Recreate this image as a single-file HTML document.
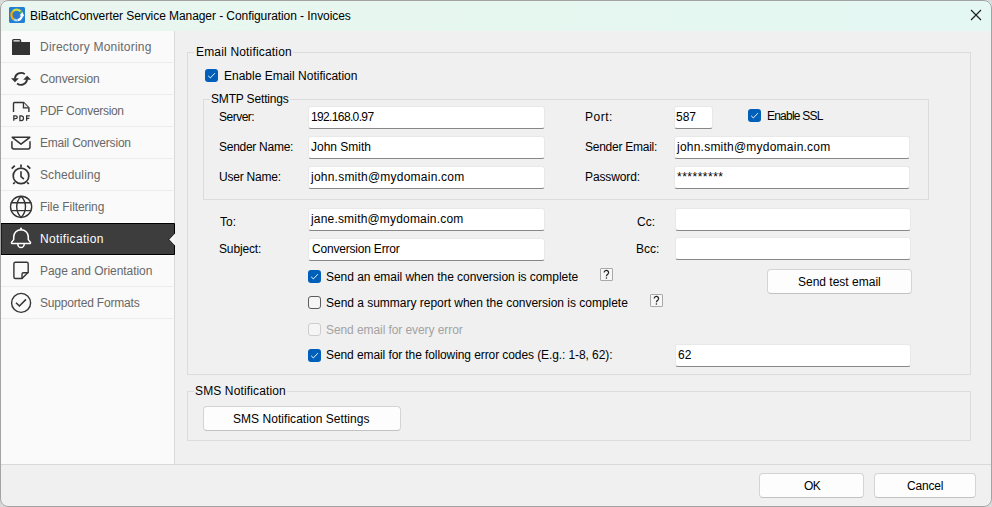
<!DOCTYPE html>
<html><head><meta charset="utf-8"><style>
*{box-sizing:border-box;margin:0;padding:0}
html,body{width:992px;height:507px;overflow:hidden;background:#d9d9d9}
body{font-family:"Liberation Sans",sans-serif;font-size:12px;color:#000;position:relative}
#win{position:absolute;left:0;top:0;width:992px;height:507px;border-radius:8px;background:#f0f0f0;overflow:hidden}
#bord{position:absolute;left:0;top:0;width:992px;height:507px;border:1px solid #a3a3a3;border-radius:8px}
#title{position:absolute;left:0;top:0;width:992px;height:31px;background:linear-gradient(90deg,#e9f6ef 0%,#e6f7f0 50%,#e4f7f2 100%)}
.t{position:absolute;line-height:14px;white-space:nowrap;font-size:12px}
#side{position:absolute;left:0;top:31px;width:175px;height:433px;background:#fafafa;border-right:1px solid #d9d9d9}
.sep{position:absolute;left:1px;width:172px;height:1px;background:#ececec}
#foot{position:absolute;left:0;top:464px;width:992px;height:1px;background:#d9d9d9}
.frame{position:absolute;border:1px solid #dcdcdc}
.gap{position:absolute;height:1px;background:#f0f0f0}
.inp{position:absolute;background:#fff;border:1px solid #e8e8e8;border-bottom:1px solid #878787;border-radius:3px}
.cb{position:absolute;width:13px;height:13px;border-radius:3px;background:#005fb8}
.cb svg{position:absolute;left:0;top:0}
.cbu{position:absolute;width:13px;height:13px;border-radius:3px;border:1px solid #5c5c5c;background:#f5f5f5}
.cbd{position:absolute;width:13px;height:13px;border-radius:3px;border:1px solid #cdcdcd;background:#f5f5f5}
.btn{position:absolute;background:#fdfdfd;border:1px solid #d4d4d4;border-bottom-color:#c2c2c2;border-radius:4px}
.q{position:absolute;width:13px;height:13px;border:1px solid #aaaaaa;background:#f7f7f7}
</style></head><body>
<div id="win">
<div id="title"></div>
<div id="side"></div>
<div class="sep" style="top:62px"></div><div class="sep" style="top:94px"></div><div class="sep" style="top:126px"></div><div class="sep" style="top:158px"></div><div class="sep" style="top:190px"></div><div class="sep" style="top:286px"></div><div class="sep" style="top:318px"></div>
<div class="sep" style="top:222px;background:#fff"></div>
<div class="sep" style="top:255px;background:#fff"></div>
<svg style="position:absolute;left:0;top:223px" width="176" height="32" viewBox="0 0 176 32">
  <path d="M1 0.5 H174.5 V11 L169 16.5 L174.5 22 V31.5 H1 Z" fill="#3d3d3d" stroke="#000" stroke-width="1"/>
  <path d="M175 10.5 L169.5 16.5 L175 22.5 Z" fill="#f5f5f5"/>
</svg>
<div id="foot"></div>
<svg style="position:absolute;left:0;top:0" width="40" height="320" viewBox="0 0 40 320">
  <g transform="translate(9,7)">
    <path d="M1 0 H15 L16 1 V15 L15 16 H1 L0 15 V1 Z" fill="#2180d6"/>
    <circle cx="7.7" cy="8" r="4.2" fill="#2a78d0"/>
    <g fill="none" stroke-width="2.3">
      <path d="M5.05 12.59 A5.3 5.3 0 0 1 3.95 4.25" stroke="#f7a800"/>
      <path d="M3.95 4.25 A5.3 5.3 0 0 1 11.76 4.59" stroke="#d6de3a"/>
      <path d="M11.5 4.3 A5.3 5.3 0 0 1 12.82 6.63" stroke="#5cb83c"/>
      <path d="M12.82 6.63 A5.3 5.3 0 0 1 8.62 13.22" stroke="#ffffff"/>
      <path d="M8.62 13.22 A5.3 5.3 0 0 1 5.05 12.59" stroke="#a8dcf4"/>
    </g>
    <path d="M10.6 8.2 L13.6 5.2 L15.3 9.6 Z" fill="#fff"/>
  </g>
  <!-- folder -->
  <rect x="12" y="42" width="18" height="13" fill="#333"/>
  <rect x="12" y="38.9" width="9.2" height="4" rx="1.6" fill="#333"/>
  <path d="M13.9 40.9 H19.3" stroke="#fafafa" stroke-width="1.1" stroke-linecap="round"/>
  <!-- conversion -->
  <g stroke="#333" stroke-width="1.8" fill="none">
    <path d="M14.9 78.6 A6.2 6.2 0 0 1 24.8 74.1"/>
    <path d="M17.1 83.5 A6.2 6.2 0 0 0 27.1 79.4"/>
  </g>
  <path d="M11 78.2 H18.9 L15 82.2 Z" fill="#333"/>
  <path d="M23.2 79.7 H31.1 L27.1 75.8 Z" fill="#333"/>
  <!-- pdf -->
  <path d="M13.5 112 V103.5 a1 1 0 0 1 1 -1 H23.6 L28.9 107.8 V112" stroke="#333" stroke-width="1.4" fill="none"/>
  <path d="M23.4 102.6 V107.9 H28.9" stroke="#333" stroke-width="1.2" fill="#e0e0e0"/>
  <g stroke="#333" stroke-width="1.25" fill="none">
    <path d="M13.8 120.8 V115.8 H15.8 a1.45 1.45 0 0 1 0 2.9 H13.8"/>
    <path d="M19.9 115.8 V120.6 H21.3 a2.2 2.4 0 0 0 0 -4.8 Z"/>
    <path d="M26.6 120.8 V115.8 H29.8 M26.6 118.3 H29.3"/>
  </g>
  <!-- email -->
  <path d="M12.2 137.3 H29.8 L21 144.2 Z" stroke="#333" stroke-width="1.5" stroke-linejoin="round" fill="none"/>
  <path d="M11.9 141.2 V147 a1.9 1.9 0 0 0 1.9 1.9 H28.1 a1.9 1.9 0 0 0 1.9 -1.9 V141.2" stroke="#333" stroke-width="1.5" fill="none"/>
  <!-- alarm -->
  <circle cx="21" cy="175.9" r="7.8" stroke="#333" stroke-width="1.7" fill="none"/>
  <path d="M21 171.2 V176.6 L23.9 179.1" stroke="#333" stroke-width="1.6" fill="none"/>
  <path d="M11.7 168.7 L14.8 165.6 M30.3 168.7 L27.2 165.6 M21 164.6 V167.3 M13.2 184 L14.8 182.4 M28.8 184 L27.2 182.4" stroke="#333" stroke-width="1.7" fill="none"/>
  <!-- globe -->
  <g stroke="#333" stroke-width="1.4" fill="none">
    <circle cx="21.1" cy="206.8" r="10.6"/>
    <path d="M21.1 196.2 A15 15 0 0 0 21.1 217.4 A15 15 0 0 0 21.1 196.2"/>
    <path d="M10.8 202.7 H31.4 M10.8 210.6 H31.4"/>
  </g>
  <!-- bell -->
  <g stroke="#fff" stroke-width="1.5" fill="none" stroke-linejoin="round">
    <path d="M12.4 243.6 H29.6 a0.9 0.9 0 0 0 0.7 -1.5 L28.3 239.6 V237 a7.3 7.3 0 0 0 -14.6 0 V239.6 L11.7 242.1 a0.9 0.9 0 0 0 0.7 1.5 Z"/>
    <path d="M17.8 244 A3.2 3.6 0 0 0 24.2 244"/>
    <path d="M21 228.4 V229.6" stroke-width="1.9" stroke-linecap="round"/>
  </g>
  <!-- page -->
  <path d="M15.4 278.5 H22 L28.2 272.3 V263.7 a1.5 1.5 0 0 0 -1.5 -1.5 H15.4 a1.5 1.5 0 0 0 -1.5 1.5 V277 a1.5 1.5 0 0 0 1.5 1.5 Z" stroke="#333" stroke-width="1.4" fill="none"/>
  <path d="M22 278.8 V274.3 a1.5 1.5 0 0 1 1.5 -1.5 H28.4" stroke="#333" stroke-width="1.4" fill="none"/>
  <!-- check circle -->
  <circle cx="21.1" cy="302.9" r="9.5" stroke="#333" stroke-width="1.4" fill="none"/>
  <path d="M16 302.8 L19.4 306 L26 299.4" stroke="#333" stroke-width="1.5" fill="none"/>
</svg>
<svg style="position:absolute;left:970px;top:9px" width="12" height="12" viewBox="0 0 12 12"><path d="M1 1L11 11M11 1L1 11" stroke="#1a1a1a" stroke-width="1.1"/></svg>

<div class="frame" style="left:187px;top:52px;width:784px;height:323px"></div><div class="gap" style="left:194px;top:52px;width:99px"></div>
<div class="frame" style="left:203px;top:99px;width:726px;height:101px"></div><div class="gap" style="left:210px;top:99px;width:80px"></div>
<div class="frame" style="left:187px;top:391px;width:784px;height:50px"></div><div class="gap" style="left:194px;top:391px;width:93px"></div>
<div class="cb" style="left:205px;top:69px"><svg width="13" height="13" viewBox="0 0 13 13"><path d="M3.2 6.9 L5.4 8.9 L9.9 4.2" stroke="#fff" stroke-width="0.95" fill="none"/></svg></div>
<div class="inp" style="left:308px;top:106px;width:237px;height:23px"></div>
<div class="inp" style="left:674px;top:106px;width:39px;height:23px"></div>
<div class="cb" style="left:748px;top:109px"><svg width="13" height="13" viewBox="0 0 13 13"><path d="M3.2 6.9 L5.4 8.9 L9.9 4.2" stroke="#fff" stroke-width="0.95" fill="none"/></svg></div>
<div class="inp" style="left:308px;top:136px;width:237px;height:23px"></div>
<div class="inp" style="left:674px;top:136px;width:236px;height:23px"></div>
<div class="inp" style="left:308px;top:166px;width:237px;height:23px"></div>
<div class="inp" style="left:674px;top:166px;width:236px;height:23px"></div>
<div class="inp" style="left:308px;top:208px;width:237px;height:23px"></div>
<div class="inp" style="left:675px;top:208px;width:236px;height:23px"></div>
<div class="inp" style="left:308px;top:238px;width:237px;height:23px"></div>
<div class="inp" style="left:675px;top:237px;width:236px;height:23px"></div>
<div class="cb" style="left:308px;top:270px"><svg width="13" height="13" viewBox="0 0 13 13"><path d="M3.2 6.9 L5.4 8.9 L9.9 4.2" stroke="#fff" stroke-width="0.95" fill="none"/></svg></div>
<div class="cbu" style="left:308px;top:296px"></div>
<div class="cbd" style="left:308px;top:323px"></div>
<div class="cb" style="left:308px;top:349px"><svg width="13" height="13" viewBox="0 0 13 13"><path d="M3.2 6.9 L5.4 8.9 L9.9 4.2" stroke="#fff" stroke-width="0.95" fill="none"/></svg></div>
<div class="inp" style="left:675px;top:344px;width:236px;height:23px"></div>
<div class="q" style="left:600px;top:268px;border:none"><div style="position:absolute;left:0;top:0;width:13px;height:13px;border:1px solid #a9a9a9;border-radius:1px"></div><svg style="position:absolute;left:0;top:0" width="13" height="13" viewBox="0 0 13 13"><path d="M4.2 4.6 A2.2 2.1 0 1 1 7.9 6.1 Q6.4 6.9 6.4 8.3" stroke="#262626" stroke-width="1.25" fill="none"/><circle cx="6.4" cy="10" r="0.8" fill="#262626"/></svg></div>
<div class="q" style="left:650px;top:294px;border:none"><div style="position:absolute;left:0;top:0;width:13px;height:13px;border:1px solid #a9a9a9;border-radius:1px"></div><svg style="position:absolute;left:0;top:0" width="13" height="13" viewBox="0 0 13 13"><path d="M4.2 4.6 A2.2 2.1 0 1 1 7.9 6.1 Q6.4 6.9 6.4 8.3" stroke="#262626" stroke-width="1.25" fill="none"/><circle cx="6.4" cy="10" r="0.8" fill="#262626"/></svg></div>
<div class="btn" style="left:767px;top:269px;width:145px;height:25px"></div>
<div class="btn" style="left:203px;top:406px;width:198px;height:25px"></div>
<div class="btn" style="left:759px;top:473px;width:105px;height:25px"></div>
<div class="btn" style="left:874px;top:473px;width:102px;height:25px"></div>
<div class="t" style="left:30px;top:9px;color:#000;letter-spacing:-0.069px;">BiBatchConverter Service Manager - Configuration - Invoices</div>
<div class="t" style="left:40px;top:40px;color:#686868;letter-spacing:0.211px;">Directory Monitoring</div>
<div class="t" style="left:40px;top:72px;color:#686868;letter-spacing:-0.111px;">Conversion</div>
<div class="t" style="left:40px;top:104px;color:#686868;letter-spacing:-0.308px;">PDF Conversion</div>
<div class="t" style="left:40px;top:136px;color:#686868;letter-spacing:-0.2px;">Email Conversion</div>
<div class="t" style="left:40px;top:168px;color:#686868;letter-spacing:0.111px;">Scheduling</div>
<div class="t" style="left:40px;top:200px;color:#686868;letter-spacing:-0.077px;">File Filtering</div>
<div class="t" style="left:40px;top:232px;color:#fff;letter-spacing:0.364px;">Notification</div>
<div class="t" style="left:40px;top:264px;color:#686868;letter-spacing:-0.053px;">Page and Orientation</div>
<div class="t" style="left:40px;top:296px;color:#686868;letter-spacing:-0.188px;">Supported Formats</div>
<div class="t" style="left:196px;top:45px;color:#000;letter-spacing:0.176px;">Email Notification</div>
<div class="t" style="left:224px;top:69px;color:#000;letter-spacing:0.0px;">Enable Email Notification</div>
<div class="t" style="left:211px;top:92px;color:#000;letter-spacing:-0.167px;">SMTP Settings</div>
<div class="t" style="left:219px;top:110px;color:#000;letter-spacing:-0.5px;">Server:</div>
<div class="t" style="left:219px;top:140px;color:#000;letter-spacing:-0.273px;">Sender Name:</div>
<div class="t" style="left:219px;top:170px;color:#000;letter-spacing:-0.222px;">User Name:</div>
<div class="t" style="left:311px;top:110px;color:#000;letter-spacing:-0.636px;">192.168.0.97</div>
<div class="t" style="left:311px;top:140px;color:#000;letter-spacing:0.0px;">John Smith</div>
<div class="t" style="left:311px;top:170px;color:#000;letter-spacing:0.227px;">john.smith@mydomain.com</div>
<div class="t" style="left:585px;top:110px;color:#000;letter-spacing:0.5px;">Port:</div>
<div class="t" style="left:676px;top:110px;color:#000;letter-spacing:0.0px;">587</div>
<div class="t" style="left:767px;top:109px;color:#000;letter-spacing:-0.778px;">Enable SSL</div>
<div class="t" style="left:585px;top:140px;color:#000;letter-spacing:-0.25px;">Sender Email:</div>
<div class="t" style="left:677px;top:140px;color:#000;letter-spacing:0.227px;">john.smith@mydomain.com</div>
<div class="t" style="left:585px;top:170px;color:#000;letter-spacing:-0.125px;">Password:</div>
<div class="t" style="left:677px;top:170px;color:#000;letter-spacing:0.5px;">*********</div>
<div class="t" style="left:220px;top:215px;color:#000;letter-spacing:0.0px;">To:</div>
<div class="t" style="left:311px;top:212px;color:#000;letter-spacing:0.182px;">jane.smith@mydomain.com</div>
<div class="t" style="left:637px;top:215px;color:#000;letter-spacing:0.0px;">Cc:</div>
<div class="t" style="left:219px;top:242px;color:#000;letter-spacing:-0.143px;">Subject:</div>
<div class="t" style="left:312px;top:242px;color:#000;letter-spacing:-0.2px;">Conversion Error</div>
<div class="t" style="left:636px;top:242px;color:#000;letter-spacing:0.0px;">Bcc:</div>
<div class="t" style="left:326px;top:270px;color:#000;letter-spacing:-0.045px;">Send an email when the conversion is complete</div>
<div class="t" style="left:326px;top:296px;color:#000;letter-spacing:-0.019px;">Send a summary report when the conversion is complete</div>
<div class="t" style="left:326px;top:323px;color:#a3a3a3;letter-spacing:-0.08px;">Send email for every error</div>
<div class="t" style="left:326px;top:348px;color:#000;letter-spacing:-0.089px;">Send email for the following error codes (E.g.: 1-8, 62):</div>
<div class="t" style="left:678px;top:348px;color:#000;letter-spacing:0.0px;">62</div>
<div class="t" style="left:798px;top:275px;color:#000;letter-spacing:0.0px;">Send test email</div>
<div class="t" style="left:195px;top:384px;color:#000;letter-spacing:0.133px;">SMS Notification</div>
<div class="t" style="left:233px;top:412px;color:#000;letter-spacing:0.042px;">SMS Notification Settings</div>
<div class="t" style="left:804px;top:479px;color:#000;letter-spacing:-0.5px;">OK</div>
<div class="t" style="left:907px;top:479px;color:#000;letter-spacing:-0.2px;">Cancel</div>
</div>
<div id="bord"></div>
</body></html>
